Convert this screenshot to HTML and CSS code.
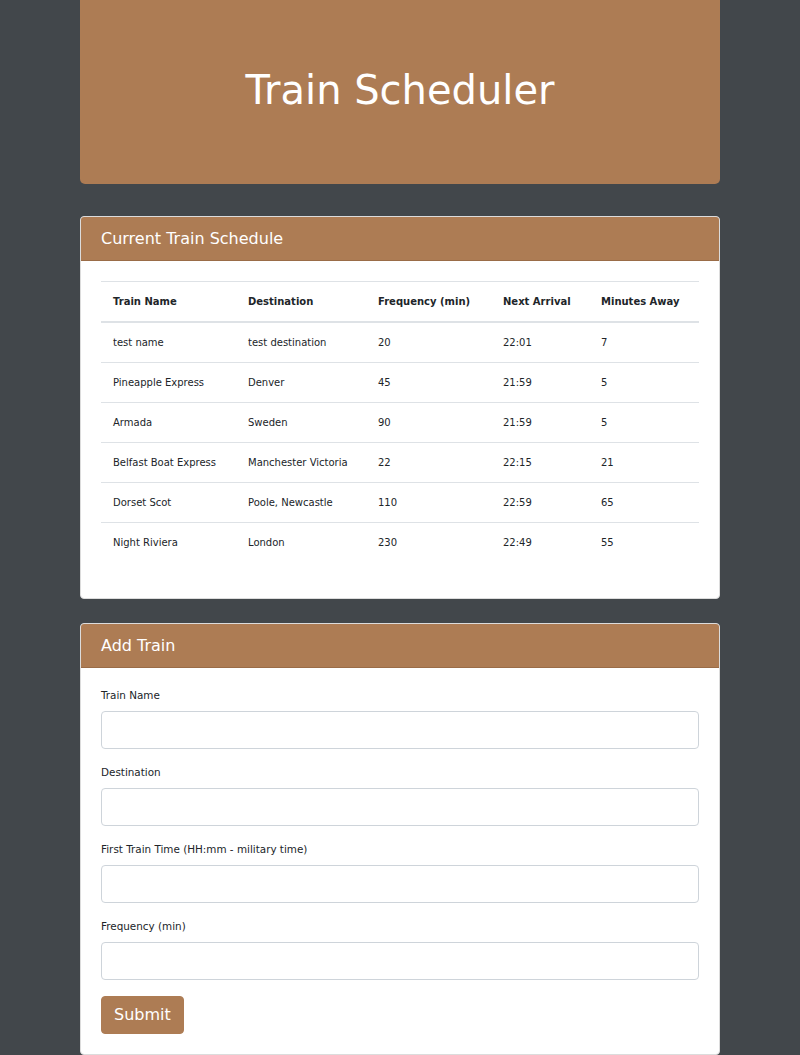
FILE: index.html
```html
<!DOCTYPE html>
<html lang="en">
<head>
<meta charset="utf-8">
<title>Train Scheduler</title>
<link rel="stylesheet" href="styles.css">
</head>
<body>
<div class="container">
  <header class="jumbotron">
    <h1 class="title">Train Scheduler</h1>
  </header>

  <section class="card">
    <div class="card-header">Current Train Schedule</div>
    <div class="card-body">
      <table class="table">
        <colgroup>
          <col class="c1"><col class="c2"><col class="c3"><col class="c4"><col class="c5">
        </colgroup>
        <thead>
          <tr><th>Train Name</th><th>Destination</th><th>Frequency (min)</th><th>Next Arrival</th><th>Minutes Away</th></tr>
        </thead>
        <tbody>
          <tr><td>test name</td><td>test destination</td><td>20</td><td>22:01</td><td>7</td></tr>
          <tr><td>Pineapple Express</td><td>Denver</td><td>45</td><td>21:59</td><td>5</td></tr>
          <tr><td>Armada</td><td>Sweden</td><td>90</td><td>21:59</td><td>5</td></tr>
          <tr><td>Belfast Boat Express</td><td>Manchester Victoria</td><td>22</td><td>22:15</td><td>21</td></tr>
          <tr><td>Dorset Scot</td><td>Poole, Newcastle</td><td>110</td><td>22:59</td><td>65</td></tr>
          <tr><td>Night Riviera</td><td>London</td><td>230</td><td>22:49</td><td>55</td></tr>
        </tbody>
      </table>
    </div>
  </section>

  <section class="card card-form">
    <div class="card-header">Add Train</div>
    <div class="card-body">
      <form class="form">
        <div class="form-group">
          <label class="label" for="name">Train Name</label>
          <input class="input" id="name" type="text">
        </div>
        <div class="form-group">
          <label class="label" for="dest">Destination</label>
          <input class="input" id="dest" type="text">
        </div>
        <div class="form-group">
          <label class="label" for="first">First Train Time (HH:mm - military time)</label>
          <input class="input" id="first" type="text">
        </div>
        <div class="form-group">
          <label class="label" for="freq">Frequency (min)</label>
          <input class="input" id="freq" type="text">
        </div>
        <button class="btn" type="button">Submit</button>
      </form>
    </div>
  </section>
</div>
</body>
</html>
```

FILE: styles.css
```css
* { box-sizing: border-box; }

html, body {
  margin: 0;
  padding: 0;
}

body {
  background: #42474b;
  font-family: "DejaVu Sans", sans-serif;
  color: #212529;
  font-size: 10px;
  line-height: 15px;
}

.container {
  width: 640px;
  margin: 0 auto;
}

.jumbotron {
  background: #ad7c54;
  height: 184px;
  padding: 66px 32px 62px;
  margin-bottom: 32px;
  border-radius: 0 0 5px 5px;
  text-align: center;
}

.title {
  margin: 0;
  font-size: 40px;
  line-height: 48px;
  font-weight: normal;
  color: #ffffff;
}

.card {
  background: #ffffff;
  border: 1px solid #dcdcdc;
  border-radius: 4px;
  margin-bottom: 24px;
  overflow: hidden;
}

.card-form { margin-bottom: 0; }

.card-header {
  background: #ad7c54;
  color: #ffffff;
  font-size: 16px;
  line-height: 20px;
  padding: 12px 20px 11px;
  border-bottom: 1px solid #9a6c47;
}

.card-body {
  padding: 20px;
}

.table {
  width: 100%;
  border-collapse: collapse;
  margin-bottom: 16px;
}

.c1 { width: 135px; }
.c2 { width: 130px; }
.c3 { width: 125px; }
.c4 { width: 98px; }
.c5 { width: 110px; }

.table th,
.table td {
  text-align: left;
  padding: 12px;
  border-top: 1px solid #dee2e6;
  font-size: 10px;
  line-height: 15px;
  vertical-align: top;
}

.table th {
  font-weight: bold;
  border-bottom: 2px solid #dee2e6;
}

.form-group {
  margin-bottom: 16px;
}

.label {
  display: block;
  margin-bottom: 8px;
  font-size: 10.4px;
  line-height: 15px;
}

.input {
  display: block;
  width: 100%;
  height: 38px;
  border: 1px solid #ced4da;
  border-radius: 4px;
  background: #ffffff;
  padding: 6px 12px;
  font-family: inherit;
  font-size: 16px;
}

.btn {
  display: inline-block;
  background: #ad7c54;
  color: #ffffff;
  border: 1px solid #ad7c54;
  border-radius: 4px;
  padding: 6px 12px;
  height: 38px;
  font-family: inherit;
  font-size: 16px;
  line-height: 24px;
  cursor: pointer;
}
```
